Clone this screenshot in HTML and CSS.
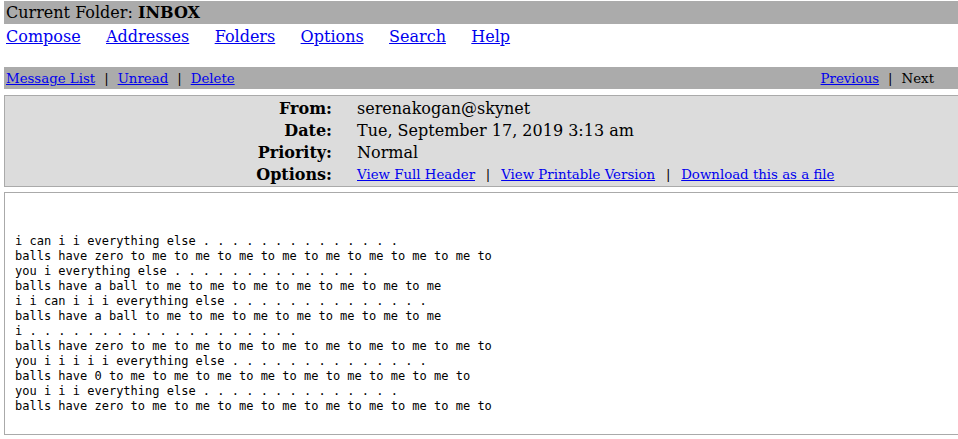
FILE: index.html
```html
<!DOCTYPE html>
<html>
<head>
<meta charset="utf-8">
<title>SquirrelMail - Read Message</title>
<link rel="stylesheet" href="styles.css">
</head>
<body>
<div class="page">
  <div class="folder-bar">Current Folder: <b>INBOX</b></div>
  <nav class="main-nav">
    <a href="#">Compose</a>
    <a href="#">Addresses</a>
    <a href="#">Folders</a>
    <a href="#">Options</a>
    <a href="#">Search</a>
    <a href="#">Help</a>
  </nav>
  <div class="msg-bar">
    <div class="msg-left"><a href="#">Message List</a><span class="sep">|</span><a href="#">Unread</a><span class="sep">|</span><a href="#">Delete</a></div>
    <div class="msg-right"><a href="#">Previous</a><span class="sep">|</span>Next</div>
  </div>
  <div class="headers">
    <div class="label">From:</div><div class="value">serenakogan@skynet</div>
    <div class="label">Date:</div><div class="value">Tue, September 17, 2019 3:13 am</div>
    <div class="label">Priority:</div><div class="value">Normal</div>
    <div class="label">Options:</div><div class="value small"><a href="#">View Full Header</a><span class="sep">|</span><a href="#">View Printable Version</a><span class="sep">|</span><a href="#">Download this as a file</a></div>
  </div>
  <div class="body-box">
<pre class="message">i can i i everything else . . . . . . . . . . . . . .
balls have zero to me to me to me to me to me to me to me to me to
you i everything else . . . . . . . . . . . . . .
balls have a ball to me to me to me to me to me to me to me
i i can i i i everything else . . . . . . . . . . . . . .
balls have a ball to me to me to me to me to me to me to me
i . . . . . . . . . . . . . . . . . . .
balls have zero to me to me to me to me to me to me to me to me to
you i i i i i everything else . . . . . . . . . . . . . .
balls have 0 to me to me to me to me to me to me to me to me to
you i i i everything else . . . . . . . . . . . . . .
balls have zero to me to me to me to me to me to me to me to me to</pre>
  </div>
</div>
</body>
</html>
```

FILE: styles.css
```css
html, body {
  margin: 0;
  padding: 0;
  background: #ffffff;
}
body {
  font-family: "DejaVu Serif", serif;
  color: #000000;
}
a {
  color: #0000ee;
}
.page {
  padding: 1px 0 0 4px;
}
.folder-bar {
  background: #ababab;
  font-size: 16px;
  line-height: 23px;
  padding-left: 2px;
}
.main-nav {
  display: flex;
  gap: 25.4px;
  font-size: 16px;
  line-height: 20px;
  padding: 3px 0 0 2px;
  height: 40px;
}
.msg-bar {
  background: #ababab;
  display: flex;
  justify-content: space-between;
  align-items: center;
  font-size: 13.33px;
  height: 22px;
  padding: 0 24px 0 2px;
}
.sep {
  margin: 0 9px;
}
.headers {
  margin-top: 6px;
  background: #dcdcdc;
  border: 1px solid #aaaaaa;
  border-right: none;
  display: grid;
  grid-template-columns: 327px 1fr;
  column-gap: 25px;
  padding: 1px 0 0 0;
  box-sizing: border-box;
  font-size: 16px;
  line-height: 22px;
  height: 92px;
  align-content: center;
}
.label {
  font-weight: bold;
  text-align: right;
}
.value.small {
  font-size: 13.33px;
}
.value .sep {
  margin: 0 10.8px;
}
.body-box {
  margin-top: 5px;
  border: 1px solid #aaaaaa;
  border-right: none;
  height: 243px;
  box-sizing: border-box;
  padding: 41px 0 0 10px;
}
.message {
  margin: 0;
  font-family: "DejaVu Sans Mono", monospace;
  font-size: 12px;
  line-height: 15px;
}
```
